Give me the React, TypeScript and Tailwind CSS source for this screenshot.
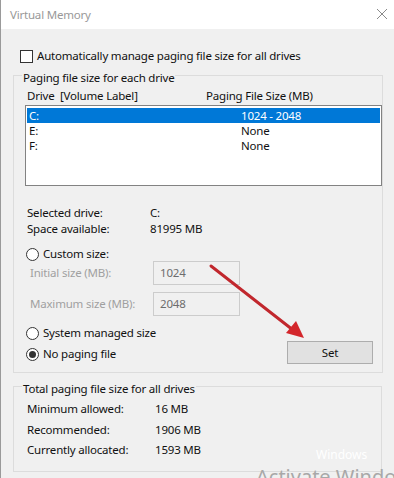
import React from "react";

const drives = [
  { id: "C:", size: "1024 - 2048", selected: true },
  { id: "E:", size: "None", selected: false },
  { id: "F:", size: "None", selected: false },
];

const totals = [
  { label: "Minimum allowed:", value: "16 MB" },
  { label: "Recommended:", value: "1906 MB" },
  { label: "Currently allocated:", value: "1593 MB" },
];

function Radio({ checked, label }: { checked?: boolean; label: string }) {
  return (
    <div className="flex items-center gap-[4px]">
      <span className="flex h-[13px] w-[13px] items-center justify-center rounded-full border border-[#333] bg-white">
        {checked && <span className="h-[7px] w-[7px] rounded-full bg-[#333]" />}
      </span>
      <span>{label}</span>
    </div>
  );
}

function GroupLabel({ children }: { children: React.ReactNode }) {
  return (
    <span className="-mt-[6px] ml-[8px] block w-fit bg-[#f0f0f0] px-[1px] leading-[16px]">
      {children}
    </span>
  );
}

export default function App() {
  return (
    <div
      className="relative h-[478px] w-[394px] overflow-hidden border-l border-[#9a9a9a] bg-[#f0f0f0] text-[11.5px] leading-[16px] tracking-[-0.2px] text-[#111]"
      style={{ fontFamily: '"Noto Sans", "Open Sans", sans-serif' }}
    >
      {/* title bar */}
      <div className="flex h-[29px] items-center justify-between bg-white pl-[9px] pr-[6px]">
        <span className="text-[#999]">Virtual Memory</span>
        <svg width="12" height="12" viewBox="0 0 12 12" className="mt-[-1px]">
          <path d="M1 1 L11 11 M11 1 L1 11" stroke="#8a8a8a" strokeWidth="1" />
        </svg>
      </div>

      {/* auto manage */}
      <div className="mt-[19px] flex items-center gap-[4px] pl-[19px]">
        <span className="h-[13px] w-[13px] border border-[#333] bg-white" />
        <span>Automatically manage paging file size for all drives</span>
      </div>

      {/* paging file size for each drive */}
      <div className="ml-[12px] mt-[11px] w-[370px] border border-[#dcdcdc]">
        <GroupLabel>Paging file size for each drive</GroupLabel>
        <div className="mt-[2px] flex pl-[13px]">
          <span className="w-[179px]">Drive&nbsp;&nbsp;[Volume Label]</span>
          <span>Paging File Size (MB)</span>
        </div>
        <div className="ml-[11px] mt-[1px] h-[81px] w-[357px] border border-[#828282] bg-white p-[1px] pt-[2px]">
          {drives.map((d) => (
            <div
              key={d.id}
              className={`flex h-[15px] items-center pl-[2px] leading-[15px] ${
                d.selected ? "bg-[#0078d7] text-white" : ""
              }`}
            >
              <span className="w-[212px]">{d.id}</span>
              <span>{d.size}</span>
            </div>
          ))}
        </div>

        <div className="mt-[19px] pl-[13px]">
          <div className="flex">
            <span className="w-[123px]">Selected drive:</span>
            <span>C:</span>
          </div>
          <div className="flex">
            <span className="w-[123px]">Space available:</span>
            <span>81995 MB</span>
          </div>
        </div>

        <div className="mt-[9px] pl-[12px]">
          <Radio label="Custom size:" />
        </div>

        <div className="mt-[-1px] flex flex-col gap-[7px] pl-[16px]">
          <div className="flex items-center">
            <span className="w-[123px] text-[#a0a0a0]">Initial size (MB):</span>
            <span className="flex h-[24px] w-[87px] items-center border border-[#cccccc] bg-[#f0f0f0] pl-[6px] text-[#6d6d6d]">
              1024
            </span>
          </div>
          <div className="flex items-center">
            <span className="w-[123px] text-[#a0a0a0]">Maximum size (MB):</span>
            <span className="flex h-[24px] w-[87px] items-center border border-[#cccccc] bg-[#f0f0f0] pl-[6px] text-[#6d6d6d]">
              2048
            </span>
          </div>
        </div>

        <div className="mt-[9px] pl-[12px]">
          <Radio label="System managed size" />
        </div>
        <div className="flex items-center justify-between pl-[12px] pr-[9px]">
          <div className="mt-[3px]">
            <Radio checked label="No paging file" />
          </div>
          <button className="h-[23px] w-[86px] border border-[#adadad] bg-[#e1e1e1]">
            Set
          </button>
        </div>
        <div className="h-[8px]" />
      </div>

      {/* totals */}
      <div className="ml-[12px] mt-[13px] h-[86px] w-[369px] border border-[#dcdcdc]">
        <GroupLabel>Total paging file size for all drives</GroupLabel>
        <div className="mt-[4px] flex flex-col gap-[4.5px] pl-[13px]">
          {totals.map((t) => (
            <div key={t.label} className="flex">
              <span className="w-[128px]">{t.label}</span>
              <span>{t.value}</span>
            </div>
          ))}
        </div>
      </div>

      {/* red arrow annotation */}
      <svg
        className="pointer-events-none absolute left-0 top-0"
        width="394"
        height="478"
        viewBox="0 0 394 478"
      >
        <line x1="210" y1="266" x2="292" y2="330" stroke="#c1272d" strokeWidth="3" strokeLinecap="round" />
        <path d="M303 338 L285 333 L295 321 Z" fill="#d3262b" />
      </svg>

      {/* activation watermark */}
      <div className="pointer-events-none absolute left-[315px] top-[448px] text-[12px] leading-[14px] tracking-normal text-white">
        Windows
      </div>
      <div className="pointer-events-none absolute left-[255px] top-[465px] whitespace-nowrap text-[20px] leading-[24px] tracking-normal text-[#a8a8a8]">
        Activate Windows
      </div>
    </div>
  );
}
